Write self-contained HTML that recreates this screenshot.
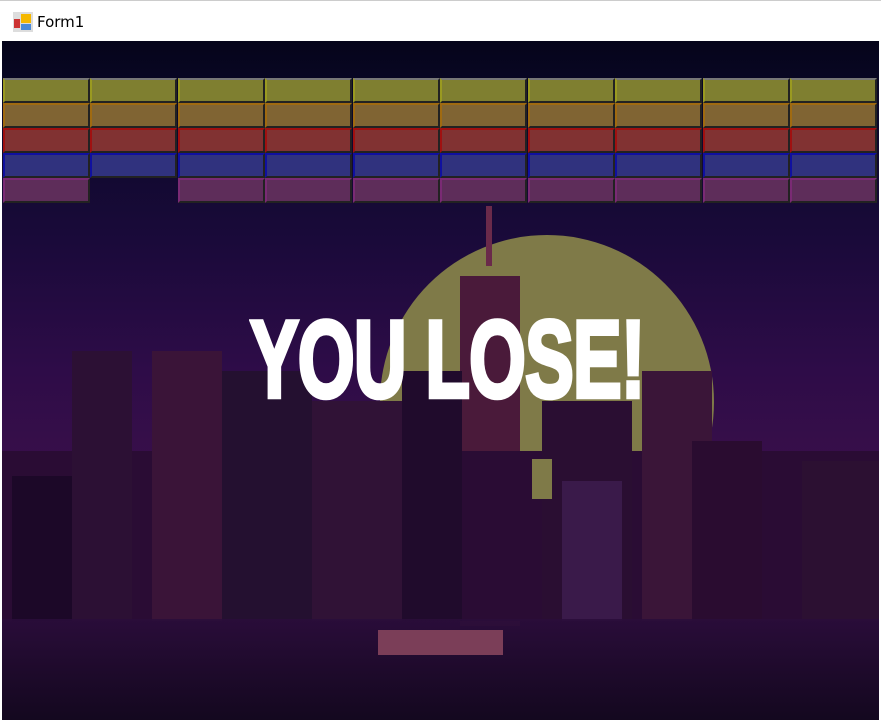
<!DOCTYPE html>
<html><head><meta charset="utf-8"><style>
*{margin:0;padding:0;box-sizing:border-box}
body{width:881px;height:720px;overflow:hidden;background:#fff;position:relative;font-family:"Liberation Sans",sans-serif}
.title{position:absolute;left:0;top:0;width:881px;height:41px;background:#fff;border-top:1px solid #ccc}
.title span{position:absolute;left:37px;top:12px;font-size:15px;color:#000;font-family:"DejaVu Sans","Liberation Sans",sans-serif}
.game{position:absolute;left:2px;top:41px;width:877px;height:679px;overflow:hidden;
background:linear-gradient(#05041a 0px,#0a0828 60px,#1a0a3a 200px,#2e0c48 330px,#3a0f4a 440px,#2a0b3a 560px,#1a0826 620px,#120620 679px)}
.moon{position:absolute;left:378px;top:194px;width:334px;height:334px;border-radius:50%;background:#7f7a48}
.b{position:absolute;height:25px;width:87px;border:2px solid;border-right-color:#222;border-bottom-color:#222}
.r0{background:#7f7f30;border-color:#9a9a20 #222 #222 #9a9a20;border-top:2px solid #777}
.r1{background:#806433;border-color:#a06a10 #222 #222 #a06a10}
.r2{background:#813232;border-color:#a01010 #222 #222 #a01010}
.r3{background:#30327e;border-color:#1010a0 #222 #222 #1010a0}
.r4{background:#5e2d5a;border-color:#7a2a74 #222 #222 #7a2a74}
.lose{position:absolute;left:248px;top:265px;color:#fff;font-family:"Liberation Sans Narrow","Liberation Sans",sans-serif;font-weight:bold;font-size:96px;letter-spacing:-1px;-webkit-text-stroke:4px #fff;transform:scale(0.76,1.14);transform-origin:top left;white-space:nowrap;line-height:1}
.paddle{position:absolute;left:376px;top:589px;width:125px;height:25px;background:#7b3e58}
.water{position:absolute;left:0;top:578px;width:877px;height:101px;background:linear-gradient(#2a0d3a,#14081f);opacity:.9}
</style></head><body>
<div class="title">
<svg style="position:absolute;left:13px;top:11px" width="20" height="20"><rect x="0" y="0" width="20" height="20" fill="#ddd"/><rect x="1" y="7" width="6" height="9" fill="#c33"/><rect x="8" y="2" width="10" height="9" fill="#f5b800"/><rect x="8" y="12" width="10" height="6" fill="#4a8ad8"/></svg>
<span>Form1</span></div>
<div class="game">
<div class="moon"></div>
<div style="position:absolute;left:484px;top:165px;width:6px;height:60px;background:#6a2a4a"></div>
<div style="position:absolute;left:458px;top:235px;width:60px;height:350px;background:#4a1a3a"></div>
<div style="position:absolute;left:0;top:410px;width:877px;height:170px;background:#2a0c34"></div>
<div style="position:absolute;left:10px;top:435px;width:60px;height:145px;background:#1c0828"></div>
<div style="position:absolute;left:70px;top:310px;width:60px;height:270px;background:#2c1034"></div>
<div style="position:absolute;left:150px;top:310px;width:70px;height:270px;background:#3a1438"></div>
<div style="position:absolute;left:220px;top:330px;width:90px;height:250px;background:#241030"></div>
<div style="position:absolute;left:310px;top:360px;width:100px;height:220px;background:#301236"></div>
<div style="position:absolute;left:400px;top:330px;width:60px;height:250px;background:#200b2c"></div>
<div style="position:absolute;left:540px;top:360px;width:90px;height:220px;background:#2a0e32"></div>
<div style="position:absolute;left:640px;top:330px;width:70px;height:250px;background:#3a1538"></div>
<div style="position:absolute;left:690px;top:400px;width:70px;height:180px;background:#2a0c30"></div>
<div style="position:absolute;left:560px;top:440px;width:60px;height:140px;background:#3a1a4a"></div>
<div style="position:absolute;left:800px;top:420px;width:77px;height:160px;background:#2c1032"></div>
<div style="position:absolute;left:530px;top:418px;width:20px;height:40px;background:#7f7a48"></div>
<div class="water"></div>
<div class="lose">YOU LOSE!</div>
<div class="paddle"></div>
<div class="b r0" style="left:1px;top:37px"></div><div class="b r0" style="left:88px;top:37px"></div><div class="b r0" style="left:176px;top:37px"></div><div class="b r0" style="left:263px;top:37px"></div><div class="b r0" style="left:351px;top:37px"></div><div class="b r0" style="left:438px;top:37px"></div><div class="b r0" style="left:526px;top:37px"></div><div class="b r0" style="left:613px;top:37px"></div><div class="b r0" style="left:701px;top:37px"></div><div class="b r0" style="left:788px;top:37px"></div>
<div class="b r1" style="left:1px;top:62px"></div><div class="b r1" style="left:88px;top:62px"></div><div class="b r1" style="left:176px;top:62px"></div><div class="b r1" style="left:263px;top:62px"></div><div class="b r1" style="left:351px;top:62px"></div><div class="b r1" style="left:438px;top:62px"></div><div class="b r1" style="left:526px;top:62px"></div><div class="b r1" style="left:613px;top:62px"></div><div class="b r1" style="left:701px;top:62px"></div><div class="b r1" style="left:788px;top:62px"></div>
<div class="b r2" style="left:1px;top:87px"></div><div class="b r2" style="left:88px;top:87px"></div><div class="b r2" style="left:176px;top:87px"></div><div class="b r2" style="left:263px;top:87px"></div><div class="b r2" style="left:351px;top:87px"></div><div class="b r2" style="left:438px;top:87px"></div><div class="b r2" style="left:526px;top:87px"></div><div class="b r2" style="left:613px;top:87px"></div><div class="b r2" style="left:701px;top:87px"></div><div class="b r2" style="left:788px;top:87px"></div>
<div class="b r3" style="left:1px;top:112px"></div><div class="b r3" style="left:88px;top:112px"></div><div class="b r3" style="left:176px;top:112px"></div><div class="b r3" style="left:263px;top:112px"></div><div class="b r3" style="left:351px;top:112px"></div><div class="b r3" style="left:438px;top:112px"></div><div class="b r3" style="left:526px;top:112px"></div><div class="b r3" style="left:613px;top:112px"></div><div class="b r3" style="left:701px;top:112px"></div><div class="b r3" style="left:788px;top:112px"></div>
<div class="b r4" style="left:1px;top:137px"></div><div class="b r4" style="left:176px;top:137px"></div><div class="b r4" style="left:263px;top:137px"></div><div class="b r4" style="left:351px;top:137px"></div><div class="b r4" style="left:438px;top:137px"></div><div class="b r4" style="left:526px;top:137px"></div><div class="b r4" style="left:613px;top:137px"></div><div class="b r4" style="left:701px;top:137px"></div><div class="b r4" style="left:788px;top:137px"></div>
</div>
</body></html>
